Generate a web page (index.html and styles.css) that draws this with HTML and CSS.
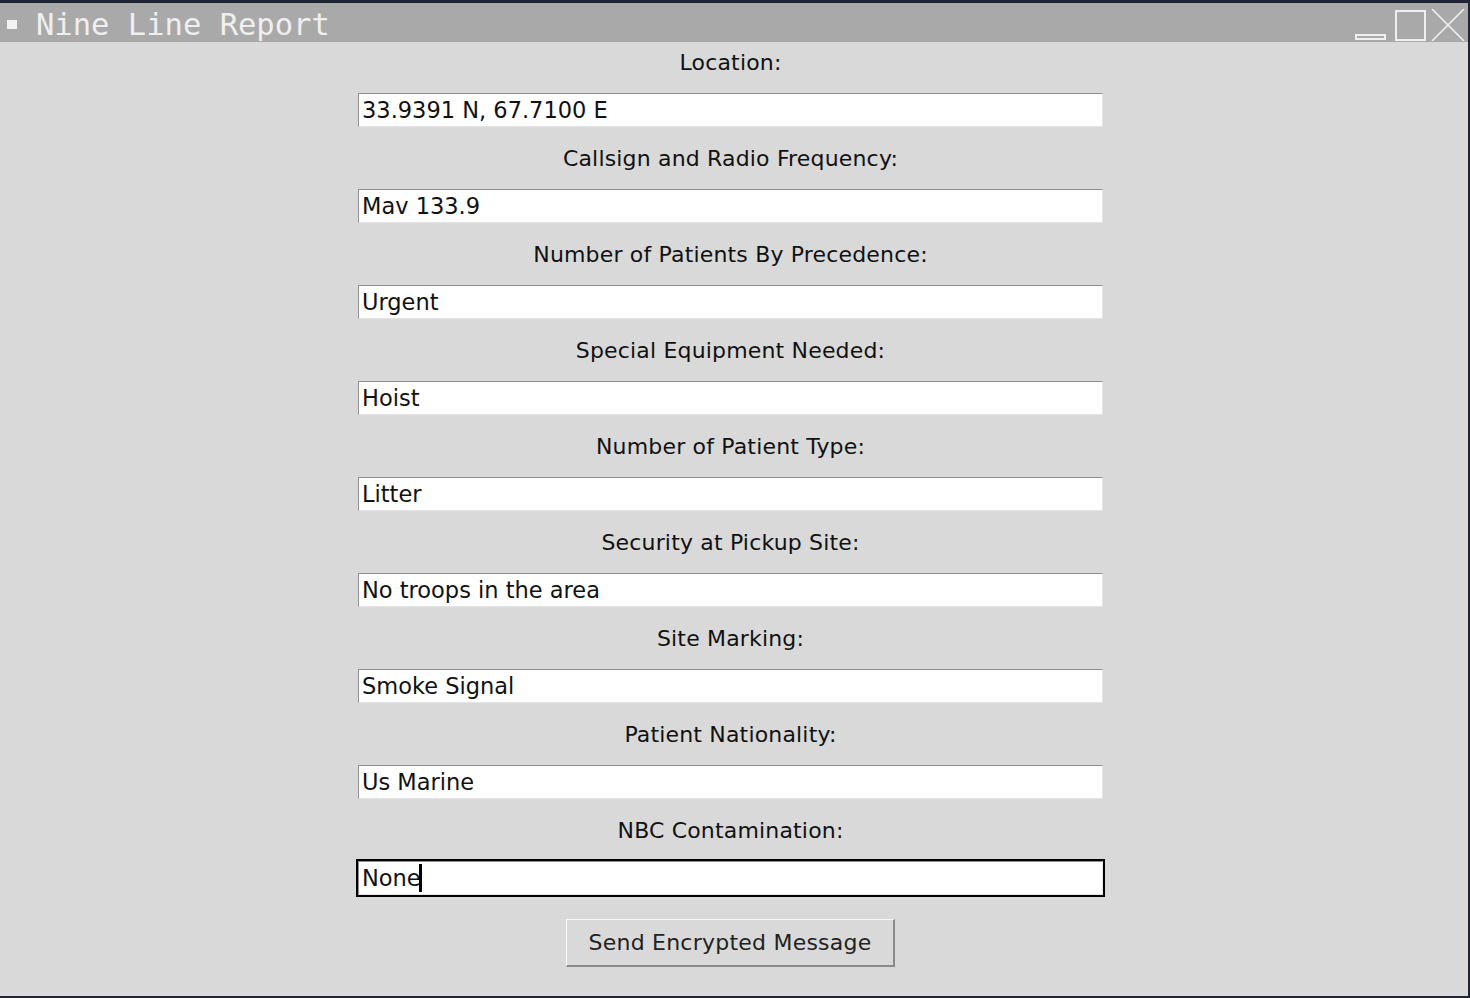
FILE: index.html
```html
<!DOCTYPE html>
<html>
<head>
<meta charset="utf-8">
<link rel="stylesheet" href="styles.css">
</head>
<body>
<div class="window">
  <div class="titlebar">
    <span class="menu-dot"></span>
    <span class="title">Nine Line Report</span>
    <div class="controls">
      <span class="ctl-min"></span>
      <span class="ctl-max"></span>
      <svg class="ctl-close" width="34" height="32" viewBox="0 0 34 32"><path d="M1 0 L33 32 M33 0 L1 32" stroke="#f0f0f0" stroke-width="1.6" fill="none"/></svg>
    </div>
  </div>
  <div class="form">
    <div class="label first">Location:</div>
    <div class="entry"><div class="field">33.9391 N, 67.7100 E</div></div>
    <div class="label">Callsign and Radio Frequency:</div>
    <div class="entry"><div class="field">Mav 133.9</div></div>
    <div class="label">Number of Patients By Precedence:</div>
    <div class="entry"><div class="field">Urgent</div></div>
    <div class="label">Special Equipment Needed:</div>
    <div class="entry"><div class="field">Hoist</div></div>
    <div class="label">Number of Patient Type:</div>
    <div class="entry"><div class="field">Litter</div></div>
    <div class="label">Security at Pickup Site:</div>
    <div class="entry"><div class="field">No troops in the area</div></div>
    <div class="label">Site Marking:</div>
    <div class="entry"><div class="field">Smoke Signal</div></div>
    <div class="label">Patient Nationality:</div>
    <div class="entry"><div class="field">Us Marine</div></div>
    <div class="label">NBC Contamination:</div>
    <div class="entry focused"><div class="field">None<span class="caret"></span></div></div>
    <div class="button">Send Encrypted Message</div>
  </div>
</div>
</body>
</html>
```

FILE: styles.css
```css
html, body {
  margin: 0;
  padding: 0;
  background: #1f2535;
  width: 1470px;
  height: 998px;
  overflow: hidden;
}
.window {
  margin-top: 3px;
  width: 1468px;
  height: 993px;
  background: #d9d9d9;
  font-family: "DejaVu Sans", sans-serif;
  color: #111;
}
.titlebar {
  height: 39px;
  background: #a9a9a9;
  display: flex;
  align-items: center;
  position: relative;
}
.menu-dot {
  width: 10px;
  height: 9px;
  background: #f2f2f2;
  margin-left: 7px;
  margin-top: 4px;
}
.title {
  font-family: "DejaVu Sans Mono", monospace;
  font-size: 30.5px;
  color: #efefef;
  margin-left: 19px;
  line-height: 39px;
  margin-top: 4px;
}
.controls {
  margin-left: auto;
  display: flex;
  align-items: flex-end;
  height: 32px;
  margin-top: 5px;
  margin-right: 3px;
}
.ctl-min {
  width: 27px;
  height: 2px;
  border: 2px solid #f0f0f0;
  margin-right: 9px;
  margin-bottom: 1px;
}
.ctl-max {
  width: 27px;
  height: 27px;
  border: 2px solid #f0f0f0;
  margin-right: 5px;
}
.ctl-close {
  display: block;
}
.form {
  width: 1461px;
  display: flex;
  flex-direction: column;
  align-items: center;
  font-size: 22px;
}
.label {
  height: 22px;
  line-height: 22px;
  margin-top: 19px;
  text-align: center;
  letter-spacing: 0.17px;
}
.label.first {
  margin-top: 10px;
}
.entry {
  margin-top: 17px;
  width: 745px;
  height: 34px;
  border: 2px solid transparent;
}
.entry.focused {
  border-color: #000;
}
.field {
  box-sizing: border-box;
  height: 34px;
  background: #fff;
  border-top: 1px solid #8e8e8e;
  border-left: 1px solid #8e8e8e;
  border-bottom: 1px solid #e4e4e4;
  border-right: 1px solid #e4e4e4;
  padding-left: 3px;
  line-height: 32px;
  white-space: nowrap;
  display: flex;
  align-items: center;
  color: #111;
  font-size: 22.5px;
}
.caret {
  display: inline-block;
  width: 3px;
  height: 28px;
  background: #000;
  margin-left: -2px;
}
.button {
  margin-top: 22px;
  box-sizing: border-box;
  width: 329px;
  height: 48px;
  background: #d9d9d9;
  border-top: 1px solid #f8f8f8;
  border-left: 1px solid #f8f8f8;
  border-bottom: 2px solid #8a8a8a;
  border-right: 2px solid #8a8a8a;
  display: flex;
  align-items: center;
  justify-content: center;
  color: #222;
  letter-spacing: 0.23px;
}
```
